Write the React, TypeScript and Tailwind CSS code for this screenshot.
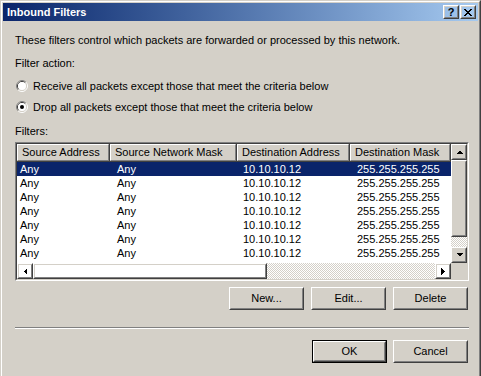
import React from "react";

const rows = Array.from({ length: 8 }, () => ["Any", "Any", "10.10.10.12", "255.255.255.255"]);

const cols = [
  { label: "Source Address", w: "w-[93px]", cell: "pl-[3px]" },
  { label: "Source Network Mask", w: "w-[127px]", cell: "pl-[7px]" },
  { label: "Destination Address", w: "w-[113px]", cell: "pl-[6px]" },
  { label: "Destination Mask", w: "w-[101px]", cell: "pl-[7px]" },
];

function Raised({ className = "", children }: { className?: string; children?: React.ReactNode }) {
  return (
    <div className={`border border-t-white border-l-white border-r-[#404040] border-b-[#404040] ${className}`}>
      <div className="flex h-full w-full items-center justify-center border border-t-[#d4d0c8] border-l-[#d4d0c8] border-r-[#808080] border-b-[#808080]">
        {children}
      </div>
    </div>
  );
}

function Arrow({ dir }: { dir: "up" | "down" | "left" | "right" }) {
  const pts = {
    up: "0,4 7,4 3.5,0.5",
    down: "0,0 7,0 3.5,3.5",
    left: "4,0 4,7 0.5,3.5",
    right: "0,0 0,7 3.5,3.5",
  }[dir];
  const vert = dir === "up" || dir === "down";
  return (
    <svg width={vert ? 7 : 4} height={vert ? 4 : 7} shapeRendering="crispEdges">
      <polygon points={pts} fill="#000" />
    </svg>
  );
}

function Radio({ checked }: { checked?: boolean }) {
  return (
    <svg width="12" height="12" className="shrink-0">
      <path d="M2.11 9.89 A5.5 5.5 0 0 1 9.89 2.11" stroke="#808080" fill="none" />
      <path d="M9.89 2.11 A5.5 5.5 0 0 1 2.11 9.89" stroke="#fff" fill="none" />
      <path d="M2.82 9.18 A4.5 4.5 0 0 1 9.18 2.82" stroke="#404040" fill="none" />
      <path d="M9.18 2.82 A4.5 4.5 0 0 1 2.82 9.18" stroke="#d4d0c8" fill="none" />
      <circle cx="6" cy="6" r="4" fill="#fff" />
      {checked && <circle cx="6" cy="6" r="2" fill="#000" />}
    </svg>
  );
}

function Button({ label, isDefault }: { label: string; isDefault?: boolean }) {
  if (isDefault) {
    return (
      <div className="h-[23px] w-[75px] border border-black">
        <Raised className="h-full w-full">{label}</Raised>
      </div>
    );
  }
  return <Raised className="h-[23px] w-[75px]">{label}</Raised>;
}

const dither =
  "bg-[repeating-conic-gradient(#ffffff_0_25%,#d4d0c8_0_50%)] bg-[length:2px_2px]";

export default function App() {
  return (
    <div className="h-[376px] w-[481px] overflow-hidden bg-[#d4d0c8] font-['Liberation_Sans',Arial,sans-serif] text-[11px] leading-[13px] text-black">
      <div className="h-[380px] w-[481px] border border-[#d4d0c8] border-r-[#404040] border-b-[#404040]">
        <div className="flex h-full flex-col border border-white border-r-[#808080] border-b-[#808080] p-px">
          {/* title bar */}
          <div className="flex h-[18px] items-center bg-gradient-to-r from-[#0a246a] to-[#a6caf0] pl-1 pr-[2px]">
            <span className="flex-1 font-bold text-white">Inbound Filters</span>
            <div className="flex gap-[1px]">
              <Raised className="h-[14px] w-[16px]">
                <span className="text-[11px] font-bold leading-none">?</span>
              </Raised>
              <Raised className="h-[14px] w-[16px]">
                <svg width="8" height="7" shapeRendering="crispEdges">
                  <path d="M0 0h2v1H0zM6 0h2v1H6zM1 1h2v1H1zM5 1h2v1H5zM2 2h4v1H2zM3 3h2v1H3zM2 4h4v1H2zM1 5h2v1H1zM5 5h2v1H5zM0 6h2v1H0zM6 6h2v1H6z" fill="#000" />
                </svg>
              </Raised>
            </div>
          </div>

          <div className="flex flex-col pl-[12px] pr-[9px]">
            <p className="mt-[13px]">These filters control which packets are forwarded or processed by this network.</p>
            <p className="mt-[10px]">Filter action:</p>
            <div className="mt-[10px] flex h-[12px] items-center gap-[5px] pl-px">
              <Radio />
              <span>Receive all packets except those that meet the criteria below</span>
            </div>
            <div className="mt-[9px] flex h-[12px] items-center gap-[5px] pl-px">
              <Radio checked />
              <span>Drop all packets except those that meet the criteria below</span>
            </div>
            <p className="mt-[12px]">Filters:</p>

            {/* list view */}
            <div className="mt-[4px] h-[139px] w-[454px] border border-[#808080] border-r-white border-b-white">
              <div className="flex h-full flex-col border border-[#404040] border-r-[#d4d0c8] border-b-[#d4d0c8] bg-white">
                <div className="flex h-[119px]">
                  <div className="flex w-[434px] flex-col overflow-hidden">
                    <div className="flex h-[18px] shrink-0">
                      {cols.map((c) => (
                        <div
                          key={c.label}
                          className={`${c.w} h-full shrink-0 border-r border-b border-r-[#404040] border-b-[#404040] bg-[#d4d0c8]`}
                        >
                          <div className="flex h-full items-center border-t border-l border-t-white border-l-white border-r border-b border-r-[#808080] border-b-[#808080] pl-[4px] whitespace-nowrap">
                            {c.label}
                          </div>
                        </div>
                      ))}
                    </div>
                    {rows.map((r, i) => (
                      <div
                        key={i}
                        className={`flex h-[14px] shrink-0 items-center ${i === 0 ? "bg-[#0a246a] text-white" : ""}`}
                      >
                        {r.map((v, j) => (
                          <div key={j} className={`${cols[j].w} ${cols[j].cell} shrink-0 whitespace-nowrap`}>
                            {v}
                          </div>
                        ))}
                      </div>
                    ))}
                  </div>
                  {/* vertical scrollbar */}
                  <div className="flex w-[16px] flex-col bg-[#d4d0c8]">
                    <Raised className="h-[16px] w-[16px]">
                      <Arrow dir="up" />
                    </Raised>
                    <Raised className="h-[77px] w-[16px]" />
                    <div className={`flex-1 ${dither}`} />
                    <Raised className="h-[16px] w-[16px]">
                      <Arrow dir="down" />
                    </Raised>
                  </div>
                </div>
                {/* horizontal scrollbar */}
                <div className="flex h-[16px]">
                  <Raised className="h-[16px] w-[16px]">
                    <Arrow dir="left" />
                  </Raised>
                  <Raised className="h-[16px] w-[234px]" />
                  <div className={`flex-1 ${dither}`} />
                  <Raised className="h-[16px] w-[16px]">
                    <Arrow dir="right" />
                  </Raised>
                  <div className="w-[16px] bg-[#d4d0c8]" />
                </div>
              </div>
            </div>

            <div className="mt-[6px] flex justify-end gap-[7px] pr-px">
              <Button label="New..." />
              <Button label="Edit..." />
              <Button label="Delete" />
            </div>

            <div className="mt-[17px] h-[2px] w-[454px] border-t border-t-[#808080] border-b border-b-white" />

            <div className="mt-[11px] flex justify-end gap-[6px] pr-px">
              <Button label="OK" isDefault />
              <Button label="Cancel" />
            </div>
          </div>
        </div>
      </div>
    </div>
  );
}
